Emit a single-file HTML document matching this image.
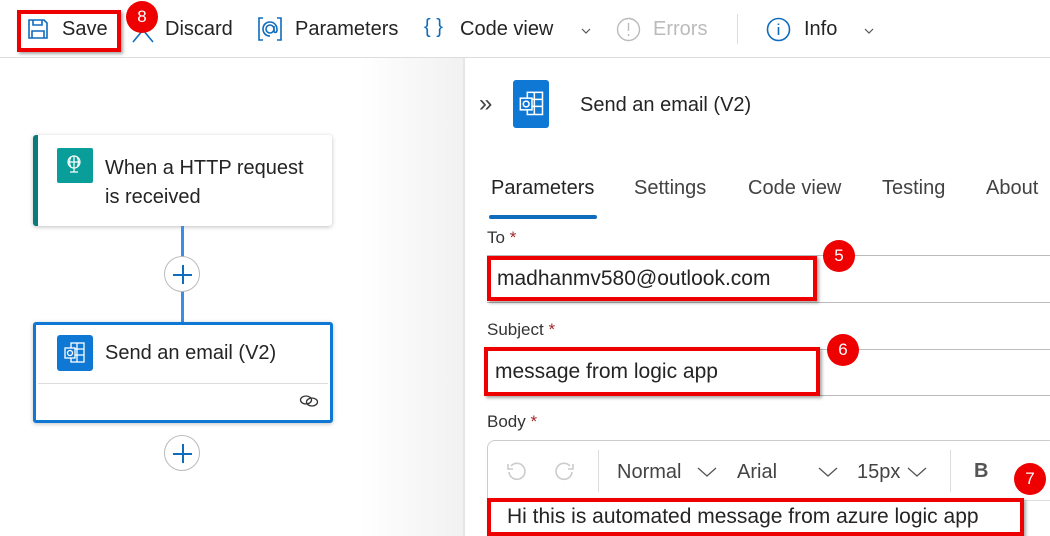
<!DOCTYPE html>
<html><head><meta charset="utf-8"><style>
*{box-sizing:border-box;margin:0;padding:0}
html{width:1050px;height:536px;overflow:hidden}
body{width:1050px;height:536px;overflow:hidden;background:#fff;font-family:"Liberation Sans",sans-serif;color:#242424;position:relative}
.a{position:absolute;white-space:nowrap}
.tb{font-size:20px;top:18px}
.red{position:absolute;border:4px solid #e00;box-shadow:2px 2px 3px rgba(0,0,0,.35)}
.badge{position:absolute;width:32px;height:32px;border-radius:50%;background:#e00;color:#fff;font-size:17px;text-align:center;line-height:32px}
.card{position:absolute;background:#fff;box-shadow:0 1px 4px rgba(0,0,0,.25);border-radius:3px}
.plus{position:absolute;width:36px;height:36px;border-radius:50%;border:1px solid #bbb;background:#fff}
.plus:before,.plus:after{content:"";position:absolute;background:#0f6cbd}
.plus:before{left:8px;top:17px;width:19px;height:2px}
.plus:after{left:17px;top:8px;width:2px;height:19px}
.lbl{font-size:17px;color:#333}
.star{color:#a4262c}
.ol{position:absolute;background:#0f78d4;border-radius:3px}
</style></head><body>
<div class="a" style="left:0;top:57px;width:1050px;height:1px;background:#ddd"></div>
<svg class="a" style="left:27px;top:18px" width="22" height="22" viewBox="0 0 22 22" fill="none" stroke="#0f6cbd" stroke-width="1.6"><path d="M2 2h15l3 3v15H2z"/><path d="M6 2v5h9V2M5 20v-7h12v7"/></svg>
<div class="a tb" style="left:62px">Save</div>
<div class="red" style="left:17px;top:10px;width:104px;height:42px"></div>
<svg class="a" style="left:130px;top:20px" width="26" height="24" viewBox="0 0 26 24" fill="none" stroke="#0f6cbd" stroke-width="1.6"><path d="M3 22L13 10l10 12"/></svg>
<div class="badge" style="left:126px;top:1px">8</div>
<div class="a tb" style="left:165px">Discard</div>
<svg class="a" style="left:257px;top:16px" width="26" height="26" viewBox="0 0 26 26" fill="none" stroke="#0f6cbd" stroke-width="1.6"><path d="M6 2H2v22h4M20 2h4v22h-4"/><circle cx="13" cy="13" r="4"/><path d="M17 10v5c0 2 3 2 3-1 0-5-3-8-7-8s-7 3-7 7 3 7 7 7"/></svg>
<div class="a tb" style="left:295px">Parameters</div>
<div class="a tb" style="left:424px;color:#0f6cbd;top:16px">{ }</div>
<div class="a tb" style="left:460px">Code view</div>
<svg class="a" style="left:580px;top:27px" width="12" height="8" viewBox="0 0 12 8" fill="none" stroke="#555" stroke-width="1.2"><path d="M2 2l4 4 4-4"/></svg>
<svg class="a" style="left:616px;top:17px" width="25" height="25" viewBox="0 0 25 25" fill="none" stroke="#bbb" stroke-width="1.4"><circle cx="12.5" cy="12.5" r="11"/><path d="M12.5 6v8M12.5 17v2"/></svg>
<div class="a tb" style="left:653px;color:#bbb">Errors</div>
<div class="a" style="left:737px;top:14px;width:1px;height:30px;background:#ddd"></div>
<svg class="a" style="left:766px;top:17px" width="25" height="25" viewBox="0 0 25 25" fill="none" stroke="#0f6cbd" stroke-width="1.6"><circle cx="12.5" cy="12.5" r="11"/><path d="M12.5 10v8M12.5 6.5v1.5"/></svg>
<div class="a tb" style="left:804px">Info</div>
<svg class="a" style="left:863px;top:27px" width="12" height="8" viewBox="0 0 12 8" fill="none" stroke="#555" stroke-width="1.2"><path d="M2 2l4 4 4-4"/></svg>
<div class="a" style="left:0;top:58px;width:464px;height:478px;background:linear-gradient(90deg,#fff 0,#fff 360px,#f1f1f1 464px)"></div>
<div class="a" style="left:463px;top:58px;width:2px;height:478px;background:#e6e6e6"></div>
<div class="card" style="left:33px;top:135px;width:299px;height:91px;border-left:5px solid #077c7a"></div>
<div class="a" style="left:57px;top:148px;width:36px;height:35px;background:#0a9e9a;border-radius:2px"></div>
<svg class="a" style="left:66px;top:155px" width="18" height="20" viewBox="0 0 18 20" fill="none" stroke="#fff" stroke-width="1.2"><circle cx="8" cy="7" r="6"/><path d="M2 7h12M8 1v12M5 2c-2 3-2 7 0 10M11 2c2 3 2 7 0 10M8 13v4M4 17h8"/></svg>
<div class="a" style="left:105px;top:154px;font-size:20px;line-height:29px">When a HTTP request<br>is received</div>
<div class="a" style="left:181px;top:226px;width:3px;height:96px;background:#3a8ee6"></div>
<div class="plus" style="left:164px;top:256px"></div>
<div class="card" style="left:33px;top:322px;width:300px;height:101px;border:3px solid #0f78d4"></div>
<div class="a" style="left:38px;top:383px;width:290px;height:1px;background:#ddd"></div>
<div class="ol" style="left:57px;top:335px;width:36px;height:36px"></div>
<svg class="a" style="left:63px;top:341px" width="24" height="24" viewBox="0 0 24 24" fill="none" stroke="#fff" stroke-width="1.3"><rect x="8" y="2" width="13" height="19"/><path d="M8 8h13M8 14h13M14 2v19"/><rect x="2" y="7" width="10" height="10" fill="#0f78d4"/><circle cx="7" cy="12" r="2.5"/></svg>
<div class="a" style="left:105px;top:342px;font-size:20px">Send an email (V2)</div>
<svg class="a" style="left:299px;top:394px" width="20" height="14" viewBox="0 0 20 14" fill="none" stroke="#333" stroke-width="1.3"><ellipse cx="7" cy="6" rx="5.5" ry="4"/><ellipse cx="13" cy="8" rx="5.5" ry="4"/></svg>
<div class="plus" style="left:164px;top:435px"></div>
<div class="a" style="left:479px;top:90px;font-size:24px;color:#444">&#187;</div>
<div class="ol" style="left:513px;top:80px;width:36px;height:48px"></div>
<svg class="a" style="left:518px;top:90px" width="28" height="28" viewBox="0 0 24 24" fill="none" stroke="#fff" stroke-width="1.3"><rect x="8" y="2" width="13" height="19"/><path d="M8 8h13M8 14h13M14 2v19"/><rect x="2" y="7" width="10" height="10" fill="#0f78d4"/><circle cx="7" cy="12" r="2.5"/></svg>
<div class="a" style="left:580px;top:94px;font-size:20px">Send an email (V2)</div>
<div class="a" style="left:491px;top:177px;font-size:20px">Parameters</div>
<div class="a" style="left:634px;top:177px;font-size:20px;color:#424242">Settings</div>
<div class="a" style="left:748px;top:177px;font-size:20px;color:#424242">Code view</div>
<div class="a" style="left:882px;top:177px;font-size:20px;color:#424242">Testing</div>
<div class="a" style="left:986px;top:177px;font-size:20px;color:#424242">About</div>
<div class="a" style="left:489px;top:215px;width:108px;height:4px;background:#0f6cbd;border-radius:2px"></div>
<div class="a lbl" style="left:487px;top:228px">To <span class="star">*</span></div>
<div class="a" style="left:487px;top:255px;width:563px;height:1px;background:#bbb"></div>
<div class="a" style="left:487px;top:302px;width:563px;height:1px;background:#bbb"></div>
<div class="a" style="left:497px;top:267px;font-size:21px">madhanmv580@outlook.com</div>
<div class="red" style="left:487px;top:256px;width:330px;height:45px"></div>
<div class="badge" style="left:823px;top:240px">5</div>
<div class="a lbl" style="left:487px;top:320px">Subject <span class="star">*</span></div>
<div class="a" style="left:487px;top:349px;width:563px;height:1px;background:#bbb"></div>
<div class="a" style="left:487px;top:395px;width:563px;height:1px;background:#bbb"></div>
<div class="a" style="left:495px;top:360px;font-size:21px">message from logic app</div>
<div class="red" style="left:484px;top:347px;width:336px;height:49px"></div>
<div class="badge" style="left:827px;top:334px">6</div>
<div class="a lbl" style="left:487px;top:412px">Body <span class="star">*</span></div>
<div class="a" style="left:487px;top:440px;width:570px;height:96px;border:1px solid #ccc;border-bottom:none;border-radius:8px 8px 0 0"></div>
<div class="a" style="left:488px;top:500px;width:562px;height:1px;background:#ddd"></div>
<svg class="a" style="left:505px;top:461px" width="22" height="22" viewBox="0 0 22 22" fill="none" stroke="#ccc" stroke-width="1.6"><path d="M6 5a8 8 0 1 1-2 6"/><path d="M3 3v5h5"/></svg>
<svg class="a" style="left:554px;top:461px" width="22" height="22" viewBox="0 0 22 22" fill="none" stroke="#ccc" stroke-width="1.6"><path d="M16 5a8 8 0 1 0 2 6"/><path d="M19 3v5h-5"/></svg>
<div class="a" style="left:598px;top:450px;width:1px;height:42px;background:#ddd"></div>
<div class="a" style="left:617px;top:461px;font-size:20px;color:#444">Normal</div>
<svg class="a" style="left:696px;top:465px" width="22" height="14" viewBox="0 0 22 14" fill="none" stroke="#555" stroke-width="1.3"><path d="M2 3l9 8 9-8"/></svg>
<div class="a" style="left:737px;top:461px;font-size:20px;color:#444">Arial</div>
<svg class="a" style="left:817px;top:465px" width="22" height="14" viewBox="0 0 22 14" fill="none" stroke="#555" stroke-width="1.3"><path d="M2 3l9 8 9-8"/></svg>
<div class="a" style="left:857px;top:461px;font-size:20px;color:#444">15px</div>
<svg class="a" style="left:906px;top:465px" width="22" height="14" viewBox="0 0 22 14" fill="none" stroke="#555" stroke-width="1.3"><path d="M2 3l9 8 9-8"/></svg>
<div class="a" style="left:950px;top:450px;width:1px;height:42px;background:#ddd"></div>
<div class="a" style="left:974px;top:460px;font-size:20px;font-weight:bold;color:#555">B</div>
<div class="badge" style="left:1014px;top:463px">7</div>
<div class="a" style="left:507px;top:505px;font-size:21px">Hi this is automated message from azure logic app</div>
<div class="red" style="left:487px;top:498px;width:537px;height:38px"></div>
</body></html>
